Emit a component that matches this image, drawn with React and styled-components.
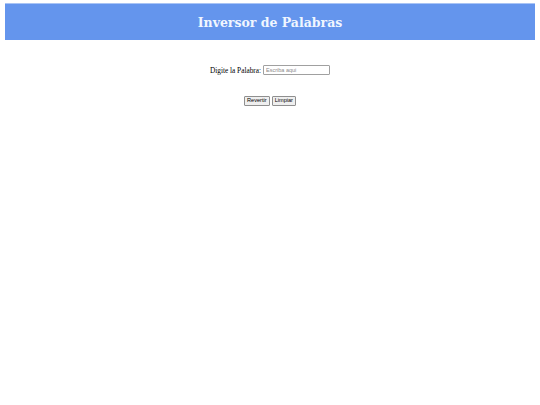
import styled, { createGlobalStyle } from 'styled-components';
import { useState } from 'react';

const GlobalStyle = createGlobalStyle`
  html, body {
    margin: 0;
    background: #fff;
  }
`;

function App() {
  const [palabra, setPalabra] = useState('');

  function onRevertir() {
    setPalabra(palabra.split('').reverse().join(''));
  }

  function onLimpiar() {
    setPalabra('');
  }

  return (
    <Page>
      <GlobalStyle />
      <Header>Inversor de Palabras</Header>
      <Form onSubmit={(e) => e.preventDefault()}>
        <Field>
          <Label htmlFor="palabra">Digite la Palabra:</Label>
          <Input
            id="palabra"
            placeholder="Escriba aqui"
            value={palabra}
            onChange={(e) => setPalabra(e.target.value)}
          />
        </Field>
        <Buttons>
          <Button type="button" onClick={onRevertir}>
            Revertir
          </Button>
          <Button type="button" onClick={onLimpiar}>
            Limpiar
          </Button>
        </Buttons>
      </Form>
    </Page>
  );
}

const Page = styled.div`
  padding: 3px 5px;
  font-family: 'Liberation Serif', 'Times New Roman', serif;
`;

const Header = styled.h1`
  margin: 0;
  height: 37px;
  display: flex;
  align-items: center;
  justify-content: center;
  background: #6495ed;
  color: #f0f6ff;
  font-family: 'DejaVu Serif', Georgia, serif;
  font-size: 12.5px;
  font-weight: bold;
  border-top: 1px solid #a9c4f5;
  box-sizing: border-box;
`;

const Form = styled.form`
  display: flex;
  flex-direction: column;
  align-items: center;
  padding-top: 25px;
`;

const Field = styled.div`
  display: flex;
  align-items: center;
  gap: 2px;
`;

const Label = styled.label`
  font-size: 7.3px;
  color: #000;
`;

const Input = styled.input`
  width: 67px;
  height: 10px;
  box-sizing: border-box;
  padding: 0 2px;
  border: 1px solid #a0a0a0;
  border-radius: 1px;
  font-family: 'Liberation Sans', Arial, sans-serif;
  font-size: 5.5px;
  outline: none;

  &::placeholder {
    color: #8a8a8a;
  }
`;

const Buttons = styled.div`
  display: flex;
  gap: 2px;
  margin-top: 21px;
`;

const Button = styled.button`
  height: 10px;
  padding: 0 2px;
  box-sizing: border-box;
  border: 1px solid #8f8f8f;
  border-radius: 1px;
  background: #efefef;
  color: #000;
  font-family: 'Liberation Sans', Arial, sans-serif;
  font-size: 5.6px;
  line-height: 1;
  cursor: pointer;
`;

export default App;
